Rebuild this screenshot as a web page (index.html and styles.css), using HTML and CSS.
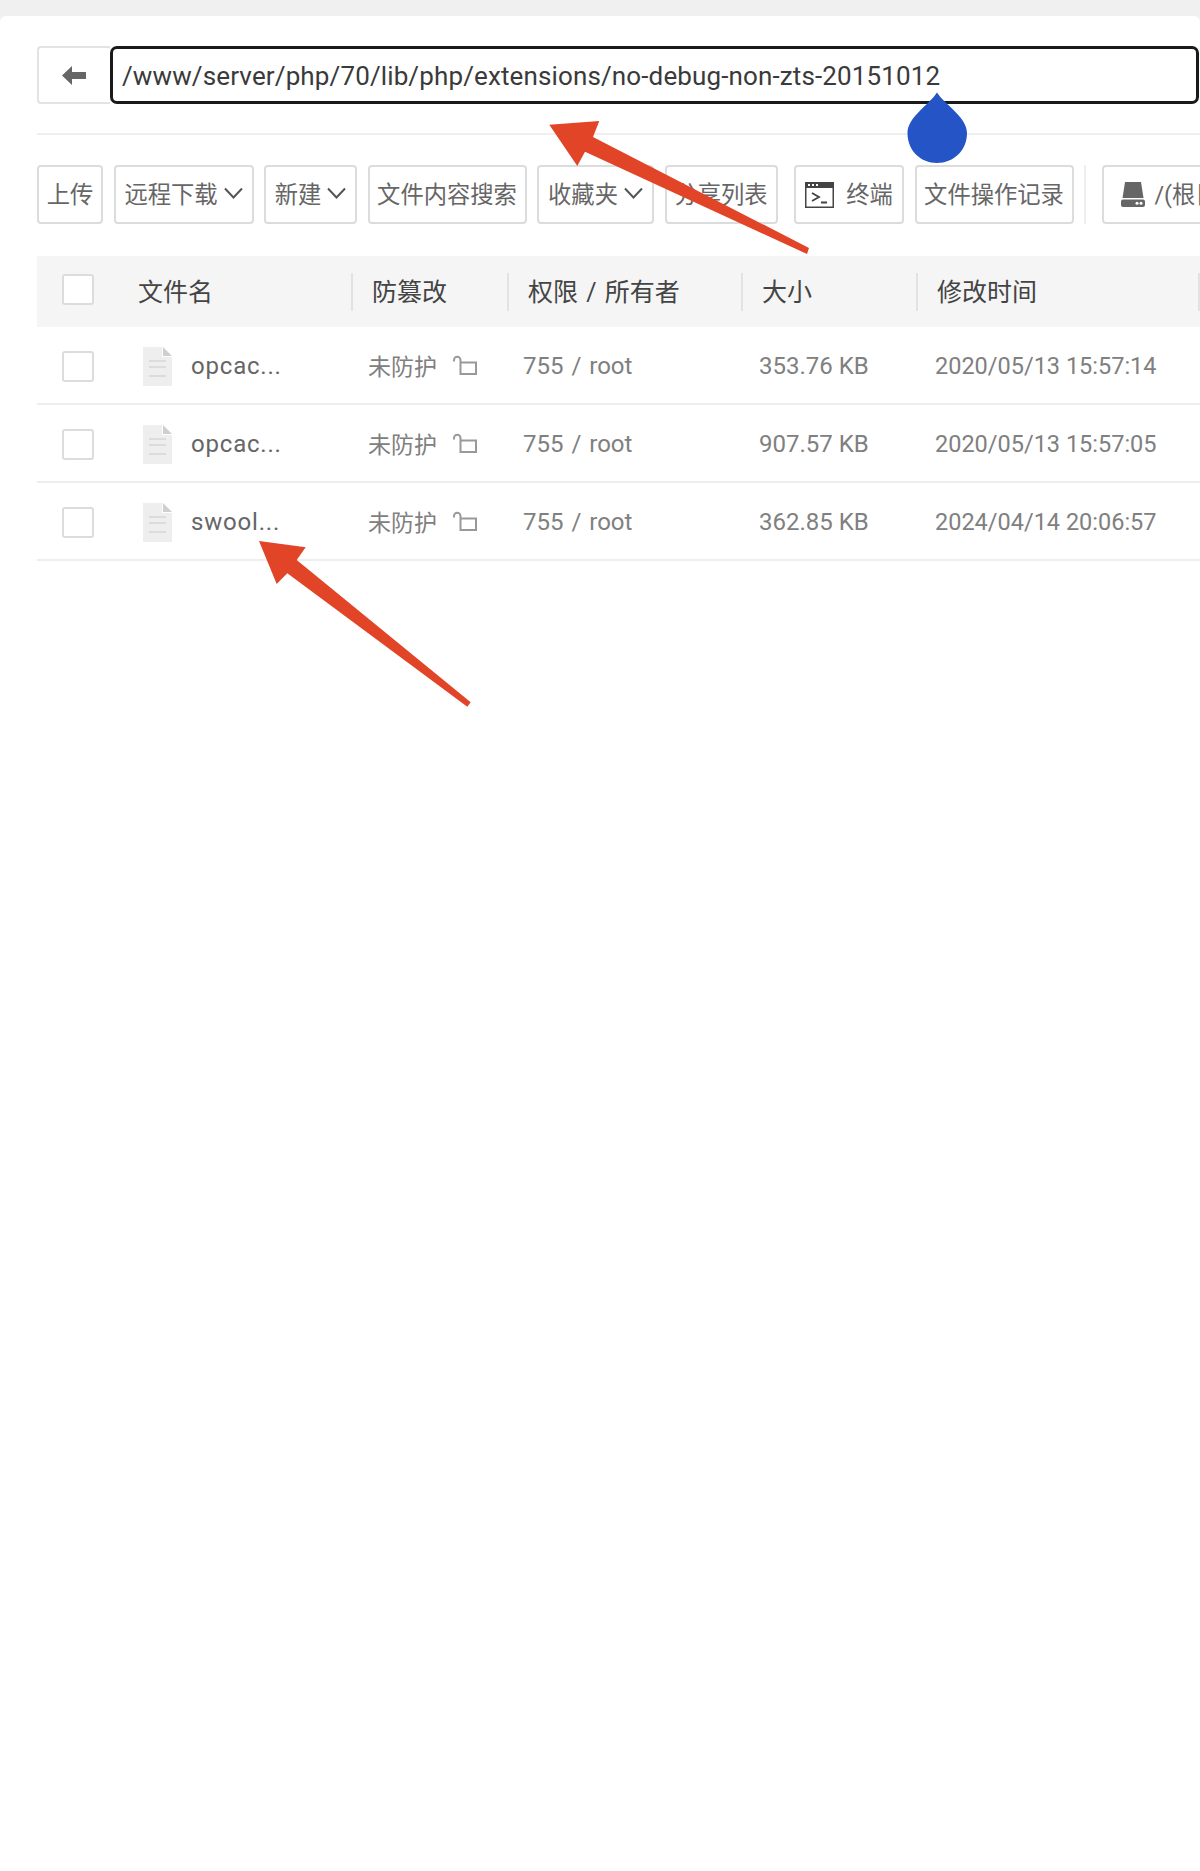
FILE: index.html
```html
<!DOCTYPE html>
<html lang="zh-CN">
<head>
<meta charset="utf-8">
<title>文件管理</title>
<link rel="stylesheet" href="styles.css">
</head>
<body>
<div class="panel">
  <div class="pathbar">
    <button class="back" type="button" aria-label="返回">
      <svg class="back-icon" viewBox="0 0 24 19"><path d="M0 9.500 10 0v6h14v7H10v6z"/></svg>
    </button>
    <div class="path">/www/server/php/70/lib/php/extensions/no-debug-non-zts-20151012</div>
  </div>
  <div class="toolbar">
    <div class="btn b-upload">上传</div>
    <div class="btn b-remote">远程下载<svg class="chev" viewBox="0 0 19 12"><path d="M1 1.500 9.500 10.500 18 1.500"/></svg></div>
    <div class="btn b-new">新建<svg class="chev" viewBox="0 0 19 12"><path d="M1 1.500 9.500 10.500 18 1.500"/></svg></div>
    <div class="btn b-search">文件内容搜索</div>
    <div class="btn b-fav">收藏夹<svg class="chev" viewBox="0 0 19 12"><path d="M1 1.500 9.500 10.500 18 1.500"/></svg></div>
    <div class="btn b-share">分享列表</div>
    <div class="btn b-term">
      <svg class="term" viewBox="0 0 29 26"><path class="term-fill" d="M0 0h29v26H0z"/><path class="term-in" d="M1.500 6h26v18.500h-26z"/><path class="term-dots" d="M3 2h2v2H3zM7 2h2v2H7zM11 2h2v2h-2z"/><path class="term-line" d="m7 11 7 4-7 4M16 20.500h6"/></svg>
      <span class="btn-text">终端</span>
    </div>
    <div class="btn b-log">文件操作记录</div>
    <div class="tool-sep"></div>
    <div class="btn b-disk">
      <svg class="disk" viewBox="0 0 24 25"><path d="M4 0h16l2.500 16h-21z"/><path d="M2 17.500h20a2 2 0 0 1 2 2V23a2 2 0 0 1-2 2H2a2 2 0 0 1-2-2v-3.500a2 2 0 0 1 2-2z"/><circle class="disk-led" cx="16" cy="21.200" r="1.500"/><circle class="disk-led" cx="20" cy="21.200" r="1.500"/></svg>
      <span class="btn-text">/(根目录)</span>
    </div>
  </div>
  <div class="table">
    <div class="tr thead">
      <div class="th th-name"><span class="check"></span><span class="th-label">文件名</span></div>
      <div class="th th-prot">防篡改</div>
      <div class="th th-perm">权限 / 所有者</div>
      <div class="th th-size">大小</div>
      <div class="th th-time">修改时间</div>
    </div>
    <div class="tr row">
      <div class="td td-name"><span class="check"></span><svg class="file" viewBox="0 0 29 39"><path class="file-body" d="M0 0h19v10h10v29H0z"/><path class="file-fold" d="M20 0l9 9h-9z"/><path class="file-line" d="M6 14h17M6 20h17M6 29h17"/></svg><span class="fname">opcac...</span></div>
      <div class="td td-prot">未防护<svg class="lock" viewBox="0 0 24 20"><path d="M7.500 7.500H23V19H7.500zM7.500 7.500V5A3.250 3.250 0 0 0 1 5V6.500"/></svg></div>
      <div class="td td-perm">755 / root</div>
      <div class="td td-size">353.76 KB</div>
      <div class="td td-time">2020/05/13 15:57:14</div>
    </div>
    <div class="tr row">
      <div class="td td-name"><span class="check"></span><svg class="file" viewBox="0 0 29 39"><path class="file-body" d="M0 0h19v10h10v29H0z"/><path class="file-fold" d="M20 0l9 9h-9z"/><path class="file-line" d="M6 14h17M6 20h17M6 29h17"/></svg><span class="fname">opcac...</span></div>
      <div class="td td-prot">未防护<svg class="lock" viewBox="0 0 24 20"><path d="M7.500 7.500H23V19H7.500zM7.500 7.500V5A3.250 3.250 0 0 0 1 5V6.500"/></svg></div>
      <div class="td td-perm">755 / root</div>
      <div class="td td-size">907.57 KB</div>
      <div class="td td-time">2020/05/13 15:57:05</div>
    </div>
    <div class="tr row">
      <div class="td td-name"><span class="check"></span><svg class="file" viewBox="0 0 29 39"><path class="file-body" d="M0 0h19v10h10v29H0z"/><path class="file-fold" d="M20 0l9 9h-9z"/><path class="file-line" d="M6 14h17M6 20h17M6 29h17"/></svg><span class="fname">swool...</span></div>
      <div class="td td-prot">未防护<svg class="lock" viewBox="0 0 24 20"><path d="M7.500 7.500H23V19H7.500zM7.500 7.500V5A3.250 3.250 0 0 0 1 5V6.500"/></svg></div>
      <div class="td td-perm">755 / root</div>
      <div class="td td-size">362.85 KB</div>
      <div class="td td-time">2024/04/14 20:06:57</div>
    </div>
  </div>
</div>
<svg class="overlay" viewBox="0 0 1200 1871" aria-hidden="true">
  <path class="drop" d="M937 92.500C945 105 967 117 967 133C967 151 953 163 937 163C921 163 907.500 151 907.500 133C907.500 117 929 105 937 92.500Z"/>
  <polygon class="mark" points="549.300,124.700 599.300,121 593,137 809,248 807,254 585,151.700 577.300,166"/>
  <polygon class="mark" points="259,541 305.700,547.300 296.700,560 470.700,702.300 467.300,706.700 287.300,573.300 276.700,584"/>
</svg>
</body>
</html>
```
FILE: styles.css
```css
* { box-sizing: border-box; }
html, body { margin: 0; padding: 0; }
body {
  position: relative;
  width: 1200px;
  height: 1871px;
  overflow: hidden;
  background: #f0f0f0;
  padding-top: 16px;
  font-family: Roboto, "Noto Sans CJK SC", sans-serif;
}
.panel {
  height: 1855px;
  background: #fff;
  border-radius: 6px 6px 0 0;
  padding: 30px 0 0 37px;
  overflow: hidden;
}
.pathbar { display: flex; height: 58px; position: relative; }
.pathbar::after {
  content: "";
  position: absolute;
  left: 0;
  right: 0;
  top: 87px;
  height: 2px;
  background: #efefef;
}
.back {
  width: 73px;
  display: flex;
  align-items: center;
  justify-content: center;
  background: #fff;
  border: 2px solid #e3e3e3;
  border-right: 0;
  border-radius: 4px 0 0 4px;
  padding: 0 2px 0 0;
}
.back-icon { width: 24px; height: 19px; fill: #666; }
.path {
  flex: 1;
  margin-right: 1px;
  border: 3px solid #1a1a1a;
  border-radius: 7px;
  padding-left: 9px;
  font-size: 26px;
  letter-spacing: .13px;
  line-height: 54px;
  color: #3a3a3a;
  white-space: nowrap;
}
.toolbar {
  display: flex;
  align-items: stretch;
  gap: 10.500px;
  height: 59px;
  margin-top: 61px;
  overflow: hidden;
}
.btn {
  display: flex;
  align-items: center;
  justify-content: center;
  flex: none;
  border: 2px solid #dcdcdc;
  border-radius: 4px;
  padding-bottom: 4px;
  font-size: 23.300px;
  color: #666;
  white-space: nowrap;
}
.b-upload { width: 66px; }
.b-remote { width: 140px; gap: 6px; }
.b-new { width: 93px; gap: 6px; }
.b-search { width: 159px; }
.b-fav { width: 117px; gap: 6px; }
.b-share { width: 113px; }
.b-term { width: 110px; margin-left: 6px; gap: 12px; padding-bottom: 0; }
.b-log { width: 159px; }
.b-disk { width: 160px; margin-left: 5px; justify-content: flex-start; padding: 0 0 0 17px; gap: 10px; }
.btn-text { margin-bottom: 4px; }
.tool-sep { width: 2px; flex: none; background: #efefef; }
.chev { width: 19px; height: 12px; fill: none; stroke: #555; stroke-width: 2; }
.term { width: 29px; height: 26px; flex: none; }
.term-fill { fill: #444; }
.term-in { fill: #fff; }
.term-dots { fill: #fff; }
.term-line { fill: none; stroke: #444; stroke-width: 1.800; }
.disk { width: 24px; height: 25px; fill: #666; flex: none; }
.disk-led { fill: #fff; }
.table { margin-top: 32px; }
.tr {
  display: grid;
  grid-template-columns: 314px 156px 234px 175px 284px;
  align-items: center;
}
.thead { height: 71px; background: #f5f5f5; }
.row { height: 78px; padding-top: 2px; border-bottom: 2px solid #eee; }
.th {
  display: flex;
  align-items: center;
  height: 38px;
  padding-bottom: 4px;
  font-size: 25px;
  color: #444;
  white-space: nowrap;
  word-spacing: 2px;
  border-left: 2px solid #e2e2e2;
  padding-left: 19px;
}
.th-name { border-left: 0; padding-left: 25px; }
.th-label { margin-left: 44px; }
.th-time { border-right: 2px solid #e2e2e2; }
.check {
  flex: none;
  width: 32px;
  height: 31px;
  background: #fff;
  border: 2px solid #dcdcdc;
  border-radius: 3px;
}
.td {
  display: flex;
  align-items: center;
  font-size: 23px;
  color: #808080;
  white-space: nowrap;
  padding-left: 17px;
}
.td-name { padding-left: 25px; }
.td-prot { padding-bottom: 2px; }
.td-perm { font-size: 24px; word-spacing: 2px; padding-left: 16px; }
.td-size { font-size: 24px; padding-left: 18px; }
.td-time { font-size: 23.500px; padding-left: 19px; }
.file { width: 29px; height: 39px; margin-left: 49px; flex: none; }
.file-body { fill: #eee; }
.file-fold { fill: #cfcfcf; }
.file-line { stroke: #dcdcdc; stroke-width: 2; fill: none; }
.fname { margin-left: 19px; font-size: 24px; letter-spacing: .8px; color: #666; }
.lock { width: 24px; height: 20px; margin-left: 16px; fill: none; stroke: #999; stroke-width: 2; flex: none; }
.overlay { position: absolute; left: 0; top: 0; width: 1200px; height: 1871px; pointer-events: none; }
.drop { fill: #2454c6; }
.mark { fill: #e24427; }
```
